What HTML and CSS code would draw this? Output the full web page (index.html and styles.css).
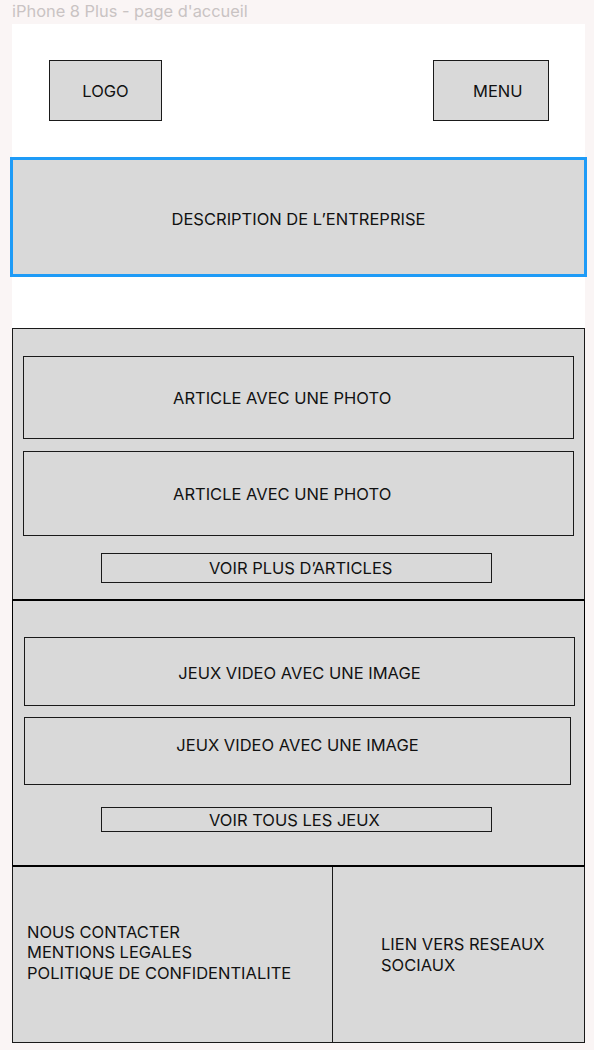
FILE: index.html
```html
<!DOCTYPE html>
<html lang="fr">
<head>
<meta charset="utf-8">
<title>iPhone 8 Plus - page d'accueil</title>
<link rel="stylesheet" href="styles.css">
</head>
<body>
<div class="label">iPhone 8 Plus - page d'accueil</div>
<div class="frame">
  <header class="header">
    <div class="box logo">LOGO</div>
    <div class="box menu">MENU</div>
  </header>
  <section class="hero">DESCRIPTION DE L’ENTREPRISE</section>
  <section class="articles">
    <div class="box article a1">ARTICLE AVEC UNE PHOTO</div>
    <div class="box article a2">ARTICLE AVEC UNE PHOTO</div>
    <div class="box btn btn1">VOIR PLUS D’ARTICLES</div>
  </section>
  <section class="games">
    <div class="box game g1">JEUX VIDEO AVEC UNE IMAGE</div>
    <div class="box game g2">JEUX VIDEO AVEC UNE IMAGE</div>
    <div class="box btn btn2">VOIR TOUS LES JEUX</div>
  </section>
  <footer class="footer">
    <div class="foot-left">
      <div>NOUS CONTACTER</div>
      <div>MENTIONS LEGALES</div>
      <div>POLITIQUE DE CONFIDENTIALITE</div>
    </div>
    <div class="foot-right">
      <div>LIEN VERS RESEAUX<br>SOCIAUX</div>
    </div>
  </footer>
</div>
</body>
</html>
```
FILE: styles.css
```css
* { box-sizing: border-box; }
html, body { margin: 0; padding: 0; }
body {
  background: #faf5f5;
  font-family: Inter, "Noto Sans", sans-serif;
  font-size: 16.5px;
  color: #111;
}
.label {
  height: 24px;
  padding-left: 12px;
  padding-top: 1px;
  font-size: 16.4px;
  line-height: 20px;
  color: #c9c3c3;
}
.frame {
  margin-left: 12px;
  width: 573px;
  background: #fff;
}
.header {
  height: 133px;
  display: flex;
  justify-content: space-between;
  align-items: flex-start;
  padding: 36px 36px 0 37px;
}
.box {
  background: #d9d9d9;
  border: 1px solid #1a1a1a;
  display: flex;
  align-items: center;
  line-height: 20px;
}
.logo {
  width: 113px;
  height: 61px;
  justify-content: center;
}
.menu {
  width: 116px;
  height: 61px;
  padding-left: 39px;
}
.hero {
  margin: 0 -2px;
  height: 120px;
  border: 3px solid #1e9bf7;
  background: #d9d9d9;
  display: flex;
  align-items: center;
  justify-content: center;
  padding-top: 3px;
  line-height: 20px;
}
.articles {
  margin-top: 51px;
  background: #d9d9d9;
  border: 1px solid #1a1a1a;
  padding: 27px 10px 16px;
  display: flex;
  flex-direction: column;
  align-items: flex-start;
}
.article {
  width: 551px;
  padding-left: 149px;
}
.a1 { height: 83px; }
.a2 { height: 85px; margin-top: 12px; }
.btn {
  width: 391px;
  padding-left: 107px;
  margin-left: 78px;
}
.btn1 { height: 30px; margin-top: 17px; }
.games {
  background: #d9d9d9;
  border: 1px solid #000;
  border-top-width: 1px;
  padding: 36px 10px 33px 11px;
  display: flex;
  flex-direction: column;
  align-items: flex-start;
}
.articles { border-bottom-color: #000; }
.game { justify-content: center; }
.g1 { width: 551px; height: 69px; padding-top: 3px; }
.g2 { width: 547px; height: 68px; margin-top: 11px; padding-bottom: 12px; }
.btn2 { height: 25px; margin-top: 22px; margin-left: 77px; }
.footer {
  background: #d9d9d9;
  border: 1px solid #1a1a1a;
  border-top-color: #000;
  height: 177px;
  display: grid;
  grid-template-columns: 320px 1fr;
  line-height: 20.5px;
}
.foot-left {
  border-right: 1px solid #1a1a1a;
  padding-left: 14px;
  display: flex;
  flex-direction: column;
  justify-content: center;
  padding-bottom: 4px;
}
.foot-right {
  padding-left: 48px;
  display: flex;
  flex-direction: column;
  justify-content: center;
}
```
